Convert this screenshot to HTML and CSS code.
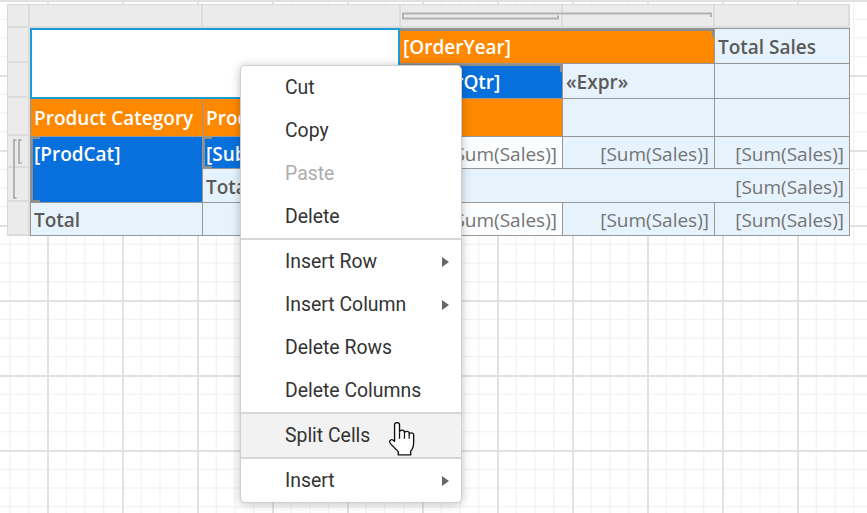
FILE: index.html
```html
<!DOCTYPE html>
<html>
<head>
<meta charset="utf-8">
<link rel="stylesheet" href="styles.css">
</head>
<body>
<div class="designer">
  <div class="corner"></div>
  <div class="ruler-top">
    <div class="rc"></div><div class="rc"></div><div class="rc"></div><div class="rc"></div><div class="rc"></div>
    <svg class="rt-brackets" width="820" height="24" viewBox="0 0 820 24">
      <path d="M373 13 V9.5 H681 V13" fill="none" stroke="#b2b2b2" stroke-width="2"/>
      <path d="M373 11.5 V14.5 H528 V11.5" fill="none" stroke="#b2b2b2" stroke-width="2"/>
    </svg>
  </div>
  <div class="ruler-left">
    <div class="rl h35"></div><div class="rl h35"></div><div class="rl h38"></div><div class="rl h32"></div><div class="rl h34"></div><div class="rl h34"></div>
    <svg class="rl-brackets" width="23" height="208" viewBox="0 0 23 208">
      <path d="M9.5 112 H7 V170 H9.5" fill="none" stroke="#b2b2b2" stroke-width="2"/>
      <path d="M14.5 112 H12 V135 H14.5" fill="none" stroke="#b2b2b2" stroke-width="2"/>
    </svg>
  </div>
  <div class="table">
    <div class="cell sel c1-3 r1-3"></div>
    <div class="cell orange c3-5 r1 grp-top">[OrderYear]</div>
    <div class="cell lb head c5 r1">Total Sales</div>
    <div class="cell blue c3 r2 grp-top">[OrderQtr]</div>
    <div class="cell lb head c4 r2">«Expr»</div>
    <div class="cell lb c5 r2"></div>
    <div class="cell orange c1 r3">Product Category</div>
    <div class="cell orange c2 r3">Product Subcategory</div>
    <div class="cell orange c3 r3"></div>
    <div class="cell lb c4 r3"></div>
    <div class="cell lb c5 r3"></div>
    <div class="cell blue top c1 r4-6 grp-left">[ProdCat]</div>
    <div class="cell blue c2 r4 grp-left">[SubCat]</div>
    <div class="cell white sum c3 r4">[Sum(Sales)]</div>
    <div class="cell lb sum c4 r4">[Sum(Sales)]</div>
    <div class="cell lb sum c5 r4">[Sum(Sales)]</div>
    <div class="cell lb head c2 r5">Total</div>
    <div class="cell lb sum c3-6 r5">[Sum(Sales)]</div>
    <div class="cell lb head c1 r6">Total</div>
    <div class="cell lb c2 r6"></div>
    <div class="cell white sum c3 r6">[Sum(Sales)]</div>
    <div class="cell lb sum c4 r6">[Sum(Sales)]</div>
    <div class="cell lb sum c5 r6">[Sum(Sales)]</div>
  </div>
</div>

<div class="menu">
  <div class="item">Cut</div>
  <div class="item">Copy</div>
  <div class="item disabled">Paste</div>
  <div class="item">Delete</div>
  <div class="sep"></div>
  <div class="item sub">Insert Row<span class="arrow"></span></div>
  <div class="item sub">Insert Column<span class="arrow"></span></div>
  <div class="item">Delete Rows</div>
  <div class="item">Delete Columns</div>
  <div class="sep"></div>
  <div class="item hover">Split Cells</div>
  <div class="sep"></div>
  <div class="item sub">Insert<span class="arrow"></span></div>
</div>

<svg class="cursor" width="26" height="34" viewBox="2 1 21 31.5" preserveAspectRatio="none">
  <path d="M6.5 3.5 A2 2 0 0 1 10.5 3.5 V10.5 A2 2 0 0 1 14.5 10.5 V11.5 A1.9 1.9 0 0 1 18.3 11.5 V12.8 A1.8 1.8 0 0 1 21.9 12.8 V20 C21.9 24 20.8 26.5 19.5 28 V31.5 H9.5 V28.5 L3.5 21.5 C2.3 20 2.2 18.2 3.3 17.6 C4.3 17 5.4 17.6 6.5 19 Z" fill="#fff" stroke="#111" stroke-width="1.1" stroke-linejoin="round"/>
  <path d="M10.5 11 V16.5 M14.5 12 V16.5 M18.3 13 V16.5" fill="none" stroke="#111" stroke-width="1"/>
</svg>
</body>
</html>
```
FILE: styles.css
```css
html, body {
  margin: 0;
  padding: 0;
}
body {
  width: 867px;
  height: 513px;
  overflow: hidden;
  position: relative;
  background-color: #fff;
  background-image:
    linear-gradient(to right, #e1e1e1 2px, transparent 2px),
    linear-gradient(to bottom, #e1e1e1 2px, transparent 2px),
    linear-gradient(to right, #efefef 1px, transparent 1px),
    linear-gradient(to bottom, #efefef 1px, transparent 1px);
  background-size: 75px 75px, 75px 75px, 18.75px 18.75px, 18.75px 18.75px;
  background-position: 47px 0, 0 0, 47px 0, 0 0;
  font-family: "Open Sans", "Liberation Sans", sans-serif;
}

.designer {
  display: grid;
  grid-template-columns: 23px 820px;
  grid-template-rows: 24px 208px;
  margin: 4px 0 0 7px;
  width: 843px;
}

.corner {
  background: #ebebeb;
  border-left: 1px solid #d9d9d9;
  border-top: 1px solid #d9d9d9;
  border-right: 2px solid #dcdcdc;
  border-bottom: 2px solid #dcdcdc;
  box-sizing: border-box;
}

.ruler-top {
  position: relative;
  display: grid;
  grid-template-columns: 173px 198px 162px 152px 135px;
  background: #ebebeb;
  border-top: 1px solid #d9d9d9;
  border-bottom: 2px solid #dcdcdc;
  box-sizing: border-box;
}
.rc {
  border-right: 2px solid #dcdcdc;
}
.rt-brackets {
  position: absolute;
  left: 0;
  top: -1px;
}

.ruler-left {
  position: relative;
  display: flex;
  flex-direction: column;
  background: #ebebeb;
  border-left: 1px solid #d9d9d9;
  box-sizing: border-box;
}
.rl {
  border-bottom: 2px solid #dcdcdc;
  border-right: 2px solid #dcdcdc;
  box-sizing: border-box;
}
.h35 { height: 35px; }
.h38 { height: 38px; }
.h32 { height: 32px; }
.h34 { height: 34px; }
.rl-brackets {
  position: absolute;
  left: -1px;
  top: 0;
}

.table {
  display: grid;
  grid-template-columns: 171px 196px 162px 151px 134px;
  grid-template-rows: 34px 34px 37px 31px 33px 32px;
  gap: 1px;
  padding: 1px;
  background: #979797;
}

.cell {
  position: relative;
  display: flex;
  align-items: center;
  padding: 2px 5px 0 3px;
  font-size: 19px;
  white-space: nowrap;
  overflow: hidden;
}

.c1 { grid-column: 1; }
.c2 { grid-column: 2; }
.c3 { grid-column: 3; }
.c4 { grid-column: 4; }
.c5 { grid-column: 5; }
.c1-3 { grid-column: 1 / 3; }
.c3-5 { grid-column: 3 / 5; }
.c3-6 { grid-column: 3 / 6; }
.r1 { grid-row: 1; }
.r2 { grid-row: 2; }
.r3 { grid-row: 3; padding-top: 0; }
.r4 { grid-row: 4; }
.r5 { grid-row: 5; }
.r6 { grid-row: 6; }
.r1-3 { grid-row: 1 / 3; }
.r4-6 { grid-row: 4 / 6; }

.sel {
  background: #fff;
  overflow: visible;
}
.sel::after {
  content: "";
  position: absolute;
  inset: -1px;
  border: 2px solid #1d9ad8;
}

.orange {
  background: #fe8800;
  color: #fff;
  font-weight: 600;
}
.blue {
  background: #0870dc;
  color: #fff;
  font-weight: 600;
}
.lb {
  background: #e6f2fc;
}
.white {
  background: #fbfdff;
}
.head {
  color: #5a5a5a;
  font-weight: 600;
}
.sum {
  color: #747474;
  justify-content: flex-end;
}
.top {
  align-items: flex-start;
  line-height: 34px;
  padding-top: 0;
}

.grp-top::before {
  content: "";
  position: absolute;
  left: 0;
  right: 0;
  top: 0;
  height: 6px;
  border-top: 2px solid #8d8d8d;
  border-right: 2px solid #8d8d8d;
}
.grp-left::before {
  content: "";
  position: absolute;
  left: 0;
  top: 0;
  bottom: 0;
  width: 7px;
  border-left: 2px solid #8d8d8d;
  border-top: 2px solid #8d8d8d;
  border-bottom: 2px solid #8d8d8d;
}

.menu {
  position: absolute;
  left: 240px;
  top: 65px;
  width: 222px;
  box-sizing: border-box;
  background: #fff;
  border: 1px solid #cfcfcf;
  border-radius: 5px;
  box-shadow: 0 1px 10px rgba(0, 0, 0, 0.25);
  font-family: Roboto, "Liberation Sans", sans-serif;
  font-size: 19.4px;
  color: #333;
  overflow: hidden;
}
.item {
  height: 43px;
  line-height: 43px;
  padding: 0 12px 0 44px;
  display: flex;
  align-items: center;
  justify-content: space-between;
}
.item.disabled {
  color: #adadad;
}
.item.hover {
  background: #f2f2f2;
}
.arrow {
  flex-shrink: 0;
  width: 0;
  height: 0;
  border-left: 7px solid #666;
  border-top: 5px solid transparent;
  border-bottom: 5px solid transparent;
}
.sep {
  height: 2px;
  background: #d6d6d6;
}

.cursor {
  position: absolute;
  left: 389px;
  top: 422px;
}
```
